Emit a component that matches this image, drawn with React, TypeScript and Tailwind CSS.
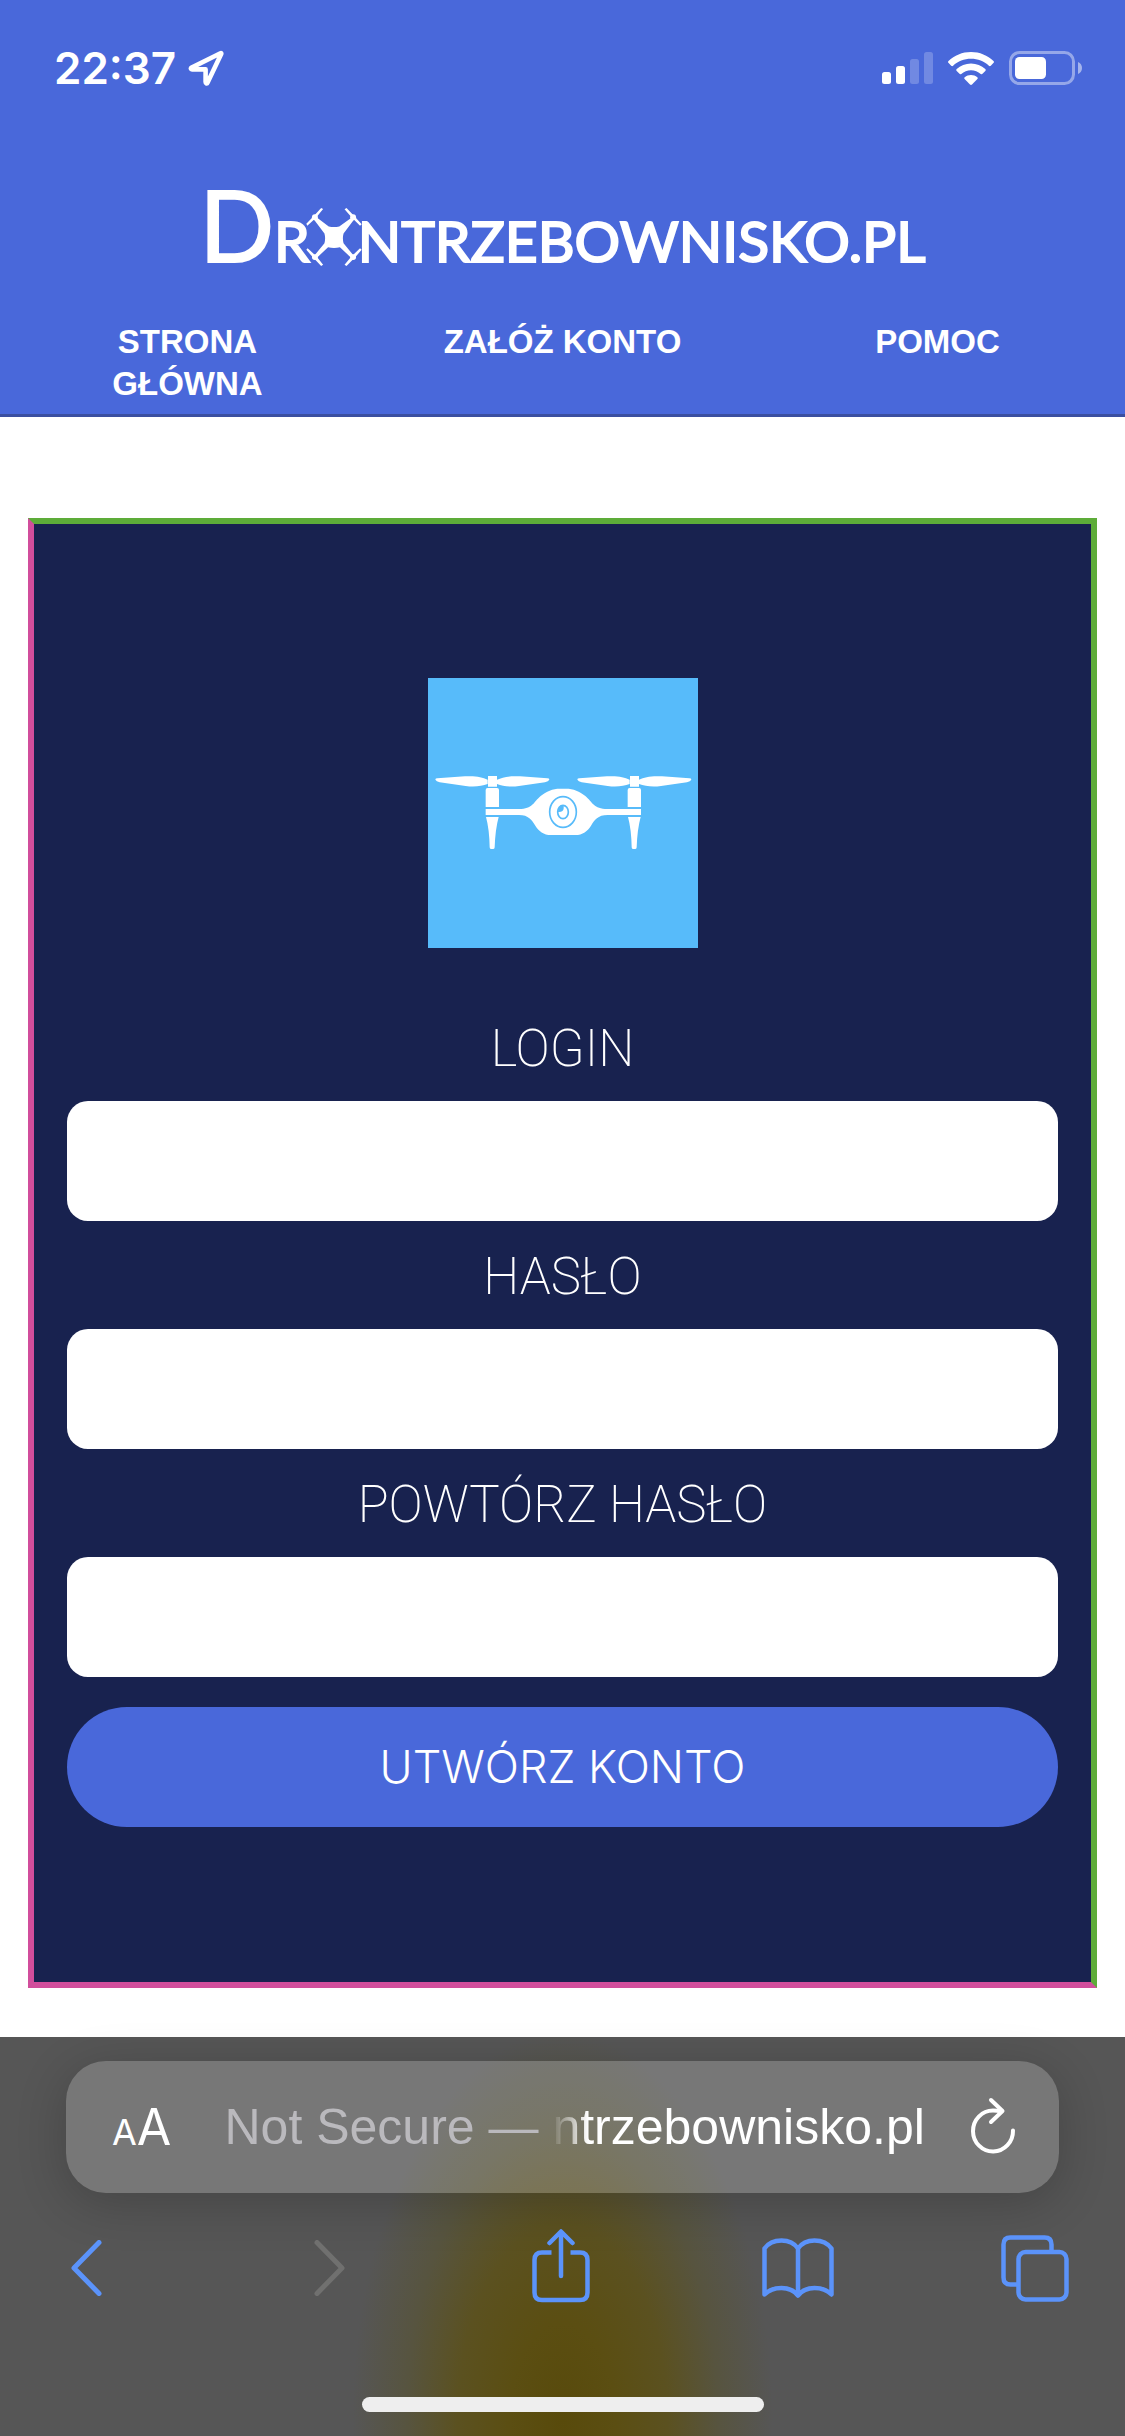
import React from "react";

function LocationIcon() {
  return (
    <svg viewBox="0 0 36 36" className="h-9 w-9" fill="none" stroke="currentColor" strokeWidth="4.6" strokeLinejoin="round" aria-hidden="true">
      <path d="M32.5 3.2 3.6 17.6c-1.2.7-.8 1.8.4 1.8H17.6V32c0 1.6 1.4 2 2 .6L33.2 4c.3-.8-.1-1.1-.7-.8Z" />
    </svg>
  );
}

function SignalIcon() {
  return (
    <svg viewBox="0 0 51 32" className="h-8 w-[51px]" fill="currentColor" aria-hidden="true">
      <rect x="0" y="20" width="9" height="12" rx="2.5" />
      <rect x="14" y="14" width="9" height="18" rx="2.5" />
      <rect x="28" y="7" width="9" height="25" rx="2.5" opacity=".22" />
      <rect x="42" y="0" width="9" height="32" rx="2.5" opacity=".22" />
    </svg>
  );
}

function WifiIcon() {
  return (
    <svg viewBox="0 0 46 33" className="h-[33px] w-[46px]" fill="currentColor" aria-hidden="true">
      <path d="M23 0C14.300 0 6.400 3.400.500 8.900c-.6.6-.6 1.300-.1 1.900l2.800 2.900c.6.6 1.300.6 1.900 0C9.900 9.300 16.200 6.800 23 6.800s13.100 2.500 17.900 6.900c.6.6 1.300.6 1.900 0l2.800-2.900c.5-.6.5-1.300-.1-1.900C39.600 3.400 31.700 0 23 0Z" />
      <path d="M23 11.500c-5.500 0-10.500 2.100-14.300 5.500-.6.500-.6 1.300 0 1.900l2.800 2.900c.5.500 1.200.6 1.800.1 2.600-2.300 6-3.700 9.700-3.700s7.100 1.400 9.700 3.700c.6.500 1.300.4 1.800-.1l2.800-2.900c.6-.6.6-1.400 0-1.900-3.800-3.400-8.800-5.500-14.300-5.500Z" />
      <path d="M23 23c-2.400 0-4.500.8-6.300 2.200-.6.500-.6 1.200-.1 1.800l5.400 5.500c.6.600 1.400.6 2 0l5.400-5.500c.5-.6.5-1.300-.1-1.800C27.500 23.800 25.400 23 23 23Z" />
    </svg>
  );
}

function BatteryIcon() {
  return (
    <svg viewBox="0 0 73 34" className="h-[34px] w-[73px]" aria-hidden="true">
      <rect x="1.500" y="1.500" width="63" height="31" rx="9" fill="none" stroke="#fff" strokeOpacity=".42" strokeWidth="3" />
      <rect x="6" y="6" width="31" height="22" rx="4.500" fill="#fff" />
      <path d="M69 11c2.500 1 4 3.300 4 6s-1.500 5-4 6Z" fill="#fff" fillOpacity=".5" />
    </svg>
  );
}

function TopDroneIcon() {
  return (
    <svg viewBox="302 103 168 176" className="-mx-1 h-[58px] w-14 shrink-0 translate-y-1" fill="currentColor" aria-hidden="true">
      <path d="M370 159q16 4 32 0L440 132 447 138 415 180q-4 14 0 30L446 248 440 256 404 222q-18 5-36 0L332 256 326 248 357 210q4-16 0-30L325 138 332 130Z" />
      <circle cx="328" cy="131" r="9" />
      <circle cx="444" cy="131" r="9" />
      <circle cx="328" cy="252" r="9" />
      <circle cx="444" cy="252" r="9" />
      <path d="M324 128 347 103 353 106 330 134 305 157 302 151ZM448 128 424 103 418 107 442 134 465 157 470 152ZM332 249 306 225 302 230 324 255 347 279 353 275ZM440 249 465 225 470 230 448 255 424 279 418 275Z" />
    </svg>
  );
}

function DroneImage() {
  return (
    <svg viewBox="21 24 810 810" className="size-[270px] bg-[#57bbfa]" fill="#fff" role="img" aria-label="Dron">
      {[0, 426].map((dx) => (
        <g key={dx} transform={`translate(${dx} 0)`}>
          <path d="M43 329q0-4 6-4l83-6c34-2 51 3 68 10v13c-18 6-38 10-66 6l-78-11q-10-3-13-8ZM385 329q0-4-6-4l-82-6c-34-2-52 3-69 10v13c18 6 38 10 66 6l78-11q10-3 13-8Z" />
          <path d="M201 318h27v32h-27ZM200 354h28q6 0 6 6v51h-40v-51q0-6 6-6ZM195 441h38q-10 36-12 91 0 5-4 5h-7q-4 0-4-5-1-55-11-91Z" />
        </g>
      ))}
      <path d="M194 417h100c42 0 42-20 65-39 17-14 36-22 58-22h18c22 0 41 8 58 22 23 19 24 39 67 39h100v18H560c-30 0-39 15-50 32-10 16-25 28-47 28h-73c-22 0-37-12-47-28-11-17-20-32-49-32H194Z" />
      <ellipse cx="426" cy="426" rx="40" ry="46" fill="none" stroke="#57bbfa" strokeWidth="5" />
      <ellipse cx="426" cy="426" rx="16" ry="20" fill="none" stroke="#57bbfa" strokeWidth="5" />
      <path d="M428 405v10q0 12-17 11 0-20 17-21Z" fill="#57bbfa" />
    </svg>
  );
}

function ReloadIcon() {
  return (
    <svg viewBox="0 3 46 56" className="h-14 w-[46px] overflow-visible" fill="none" stroke="currentColor" strokeWidth="4" strokeLinecap="round" strokeLinejoin="round" aria-hidden="true">
      <path d="M31 15.500C28.500 14.800 26 14.500 23 14.500A20 20.500 0 1 0 43 34.500" />
      <path d="M21 4 32.500 15 21 26" />
    </svg>
  );
}

function BackIcon() {
  return (
    <svg viewBox="0 0 68 56" className="h-14 w-[68px]" fill="none" stroke="currentColor" strokeWidth="5" strokeLinecap="round" strokeLinejoin="round" aria-hidden="true">
      <path d="M43 2.500 18 28 43 53.500" />
    </svg>
  );
}

function ForwardIcon() {
  return (
    <svg viewBox="0 0 68 56" className="h-14 w-[68px]" fill="none" stroke="currentColor" strokeWidth="5" strokeLinecap="round" strokeLinejoin="round" aria-hidden="true">
      <path d="M26 2.500 51 28 26 53.500" />
    </svg>
  );
}

function ShareIcon() {
  return (
    <svg viewBox="0 0 58 78" className="h-[78px] w-[58px]" fill="none" stroke="currentColor" strokeWidth="4.500" strokeLinejoin="round" aria-hidden="true">
      <path d="M19.500 23.500H10q-7.500 0-7.500 7.500v32.500q0 7.500 7.500 7.500h38q7.500 0 7.500-7.500V31q0-7.500-7.500-7.500h-9.500" />
      <path d="M29 47V3M17.500 14 29 2.500 40.500 14" strokeLinecap="round" />
    </svg>
  );
}

function BookIcon() {
  return (
    <svg viewBox="0 0 72 60" className="h-[60px] w-[72px]" fill="none" stroke="currentColor" strokeWidth="4.500" strokeLinejoin="round" aria-hidden="true">
      <path d="M36 10.500C32.500 5.500 26.500 2.500 19.500 2.500 12 2.500 6 5.500 2.500 10.500V56.500C6.500 52.500 12 50 19.500 50 26.500 50 32 52.500 36 57.500 40 52.500 45.500 50 52.500 50 60 50 65.500 52.500 69.500 56.500V10.500C66 5.500 60 2.500 52.500 2.500 45.500 2.500 39.500 5.500 36 10.500ZM36 10.500V57.500" />
    </svg>
  );
}

function TabsIcon() {
  return (
    <svg viewBox="0 0 68 67" className="h-[67px] w-[68px]" fill="none" stroke="currentColor" strokeWidth="4.500" aria-hidden="true">
      <rect x="17.500" y="17" width="48" height="47.500" rx="7" />
      <path d="M50.500 16V9.500q0-7-7-7H9.500q-7 0-7 7v33q0 7 7 7h7" />
    </svg>
  );
}

const navItems = ["STRONA GŁÓWNA", "ZAŁÓŻ KONTO", "POMOC"];

const fields = [
  { id: "login", label: "LOGIN", type: "text" },
  { id: "password", label: "HASŁO", type: "password" },
  { id: "password-repeat", label: "POWTÓRZ HASŁO", type: "password" },
];

export default function App() {
  return (
    <div className="flex min-h-screen flex-col bg-white">
      <header className="border-b-[3px] border-[#3b4fa0] bg-[#4968da] text-white">
        <div className="flex items-center justify-between pt-12 pr-[43px] pl-[54px]">
          <div className="flex items-center gap-3 font-['Inter',sans-serif] text-[44px] leading-10 font-semibold">
            <span>22:37</span>
            <LocationIcon />
          </div>
          <div className="flex items-center gap-[15px]">
            <SignalIcon />
            <WifiIcon />
            <BatteryIcon />
          </div>
        </div>

        <a href="#" className="mt-[91px] flex h-[94px] items-baseline justify-center font-['Lato',sans-serif] text-[57px] leading-[90px] [-webkit-text-stroke:2px_white]" aria-label="Drontrzebownisko.pl">
          <span className="text-[98px]">D</span>
          <span>R</span>
          <TopDroneIcon />
          <span>NTRZEBOWNISKO.PL</span>
        </a>

        <nav className="mt-12 grid grid-cols-3 pb-[9px] text-center font-['Liberation_Sans',sans-serif] text-[33px] leading-[42px] font-bold">
          {navItems.map((item) => (
            <a key={item} href="#" className="px-12">
              {item}
            </a>
          ))}
        </nav>
      </header>

      <main className="px-7 pt-[101px] pb-[49px]">
        <form className="flex flex-col border-6 border-t-[#5dac39] border-r-[#5dac39] border-b-[#d14e9c] border-l-[#d14e9c] bg-[#18224f] px-[33px] pt-[154px] pb-[155px]" onSubmit={(e) => e.preventDefault()}>
          <div className="mb-[45px] flex justify-center">
            <DroneImage />
          </div>
          {fields.map((f) => (
            <div key={f.id} className="flex flex-col">
              <label htmlFor={f.id} className="pt-1 text-center font-['Roboto',sans-serif] text-[51px] leading-[104px] font-extralight text-white">
                {f.label}
              </label>
              <input id={f.id} type={f.type} className="h-[120px] w-full rounded-[21px] bg-white px-6 text-[40px] text-black outline-none" />
            </div>
          ))}
          <button type="submit" className="mt-[30px] h-[120px] w-full rounded-full bg-[#4968da] font-['Inter',sans-serif] text-[45px] font-light text-white">
            UTWÓRZ KONTO
          </button>
        </form>
      </main>

      <footer className="flex flex-1 flex-col items-stretch bg-[#565656] bg-[radial-gradient(ellipse_210px_390px_at_50%_96%,#584a0b_0%,#5b4e12_25%,#5b5120_50%,#57543f_74%,#565656_100%)] pt-6 text-[#5b93fa]">
        <div className="mx-[66px] flex h-[132px] items-center rounded-[40px] bg-white/20 pr-[43px] pl-[46px] text-white shadow-[0_10px_50px_rgba(0,0,0,0.2)]">
          <button type="button" aria-label="Text size" className="flex items-baseline font-['Inter',sans-serif]">
            <span className="text-[36px]">A</span>
            <span className="text-[50px]">A</span>
          </button>
          <div className="flex flex-1 justify-center pl-2 whitespace-pre font-['Liberation_Sans',sans-serif] text-[50px]">
            <span className="text-[#bab9bd]">Not Secure — </span>
            <span className="[mask-image:linear-gradient(to_right,transparent,black_36px)]">ntrzebownisko.pl</span>
          </div>
          <button type="button" aria-label="Reload">
            <ReloadIcon />
          </button>
        </div>

        <div className="mt-9 flex h-[78px] items-center justify-between px-14">
          <button type="button" aria-label="Back">
            <BackIcon />
          </button>
          <button type="button" aria-label="Forward" disabled className="text-[#70706f]">
            <ForwardIcon />
          </button>
          <button type="button" aria-label="Share" className="flex w-[68px] justify-center">
            <ShareIcon />
          </button>
          <button type="button" aria-label="Bookmarks" className="flex w-[72px] justify-center">
            <BookIcon />
          </button>
          <button type="button" aria-label="Tabs">
            <TabsIcon />
          </button>
        </div>

        <div className="mx-auto mt-auto mb-6 h-[15px] w-[402px] rounded-full bg-[#eeeeee]" />
      </footer>
    </div>
  );
}
